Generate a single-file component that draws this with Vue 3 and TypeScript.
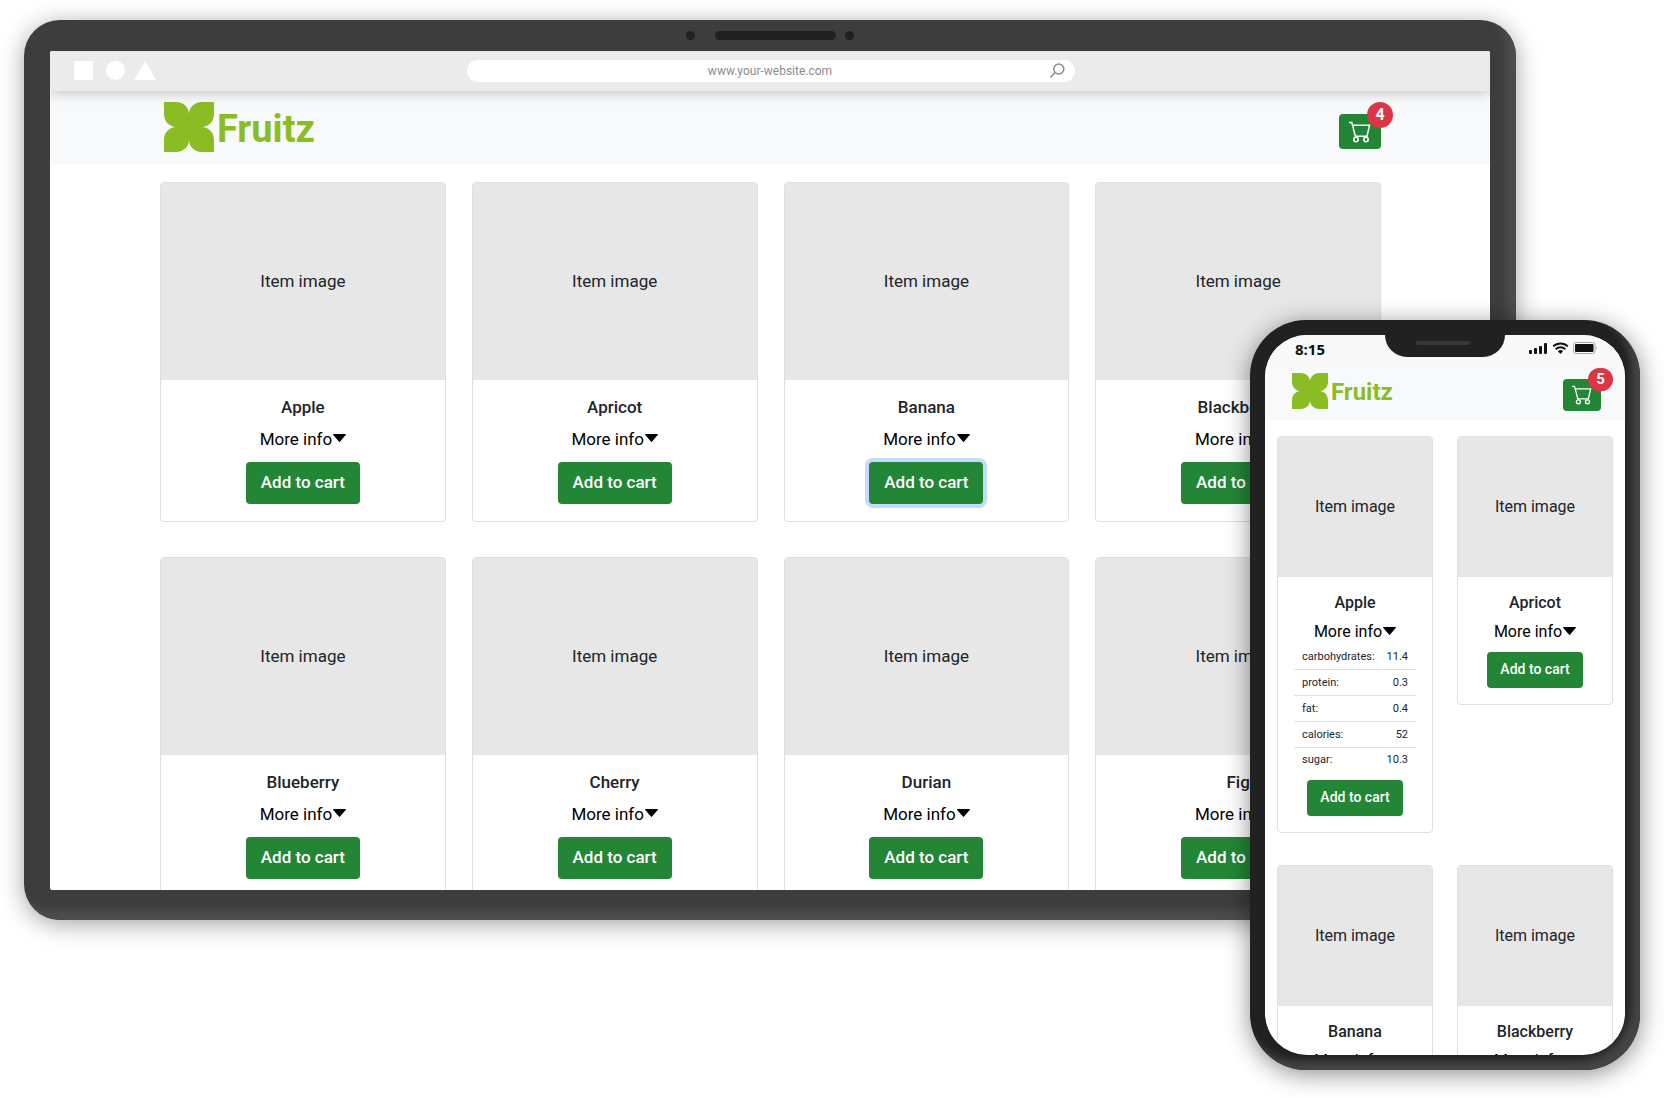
<script setup lang="ts">
interface Nutrient {
  label: string
  value: string
}

interface Fruit {
  name: string
  focused?: boolean
  nutrients?: Nutrient[]
}

interface Device {
  id: 'desktop' | 'mobile'
  cartCount: number
  fruits: Fruit[]
}

const desktop: Device = {
  id: 'desktop',
  cartCount: 4,
  fruits: [
    { name: 'Apple' },
    { name: 'Apricot' },
    { name: 'Banana', focused: true },
    { name: 'Blackberry' },
    { name: 'Blueberry' },
    { name: 'Cherry' },
    { name: 'Durian' },
    { name: 'Fig' },
  ],
}

const mobile: Device = {
  id: 'mobile',
  cartCount: 5,
  fruits: [
    {
      name: 'Apple',
      nutrients: [
        { label: 'carbohydrates:', value: '11.4' },
        { label: 'protein:', value: '0.3' },
        { label: 'fat:', value: '0.4' },
        { label: 'calories:', value: '52' },
        { label: 'sugar:', value: '10.3' },
      ],
    },
    { name: 'Apricot' },
    { name: 'Banana' },
    { name: 'Blackberry' },
  ],
}

const devices: Device[] = [desktop, mobile]
</script>

<template>
  <main class="stage">
    <section v-for="device in devices" :key="device.id" class="device" :class="device.id">
      <div v-if="device.id === 'desktop'" class="camera-bar">
        <span class="lens"></span>
        <span class="speaker"></span>
        <span class="lens"></span>
      </div>

      <div class="screen">
        <form v-if="device.id === 'desktop'" class="browser-bar" @submit.prevent>
          <svg class="shapes" width="82" height="20" viewBox="0 0 82 20" fill="#fff" aria-hidden="true">
            <rect width="19" height="19" />
            <circle cx="41.500" cy="9.500" r="9.500" />
            <path d="M71 0 82 19H60z" />
          </svg>
          <div class="address">
            <input type="text" value="www.your-website.com" aria-label="Address" />
            <svg width="16" height="16" viewBox="0 0 16 16" fill="none" stroke="#8c8c8c" stroke-width="1.500" aria-hidden="true">
              <circle cx="9.800" cy="6" r="5" />
              <path d="M6.200 9.500 1.300 14.500" />
            </svg>
          </div>
        </form>

        <div v-else class="status-bar">
          <time>8:15</time>
          <div class="notch"><span></span></div>
          <svg width="68" height="14" viewBox="0 0 68 14" aria-hidden="true">
            <g fill="#111">
              <rect x="0" y="9" width="3" height="4" rx="1" />
              <rect x="5" y="7" width="3" height="6" rx="1" />
              <rect x="10" y="5" width="3" height="8" rx="1" />
              <rect x="15" y="2" width="3" height="11" rx="1" />
              <path d="M31.500 13 34.100 10.300a3.800 3.800 0 0 0-5.200 0z" />
            </g>
            <g fill="none" stroke="#111" stroke-width="1.900">
              <path d="M24.200 5.400a10.600 10.600 0 0 1 14.600 0" />
              <path d="M26.700 8.200a6.900 6.900 0 0 1 9.600 0" />
            </g>
            <rect x="44.500" y="1.500" width="21.500" height="11" rx="2.500" fill="none" stroke="#aaa" />
            <rect x="46" y="3" width="18.500" height="8" rx="1" fill="#111" />
            <path d="M67 5.500v3q1.500-1.500 0-3" fill="#aaa" />
          </svg>
        </div>

        <header class="shop-header">
          <a href="#" class="brand">
            <svg viewBox="0 0 50 50" fill="#8abd24" aria-hidden="true">
              <path d="M0 0H12C20 0 25 6 25 12C25 6 30 0 38 0H50V12C50 20 44 25 38 25C44 25 50 30 50 38V50H38C30 50 25 44 25 38C25 44 20 50 12 50H0V38C0 30 6 25 12 25C6 25 0 20 0 12z" />
            </svg>
            <span>Fruitz</span>
          </a>
          <button type="button" class="cart" aria-label="Cart">
            <svg viewBox="0 0 22 22" fill="none" stroke="#fff" stroke-width="1.500" aria-hidden="true">
              <path d="M0 1.500H2.800L6.400 15.300H18L20.500 4.300H3.600" />
              <circle cx="7" cy="18.500" r="2.200" />
              <circle cx="17" cy="18.500" r="2.200" />
            </svg>
            <span class="badge">{{ device.cartCount }}</span>
          </button>
        </header>

        <div class="catalog">
          <article v-for="fruit in device.fruits" :key="fruit.name" class="card">
            <div class="picture">Item image</div>
            <div class="card-body">
              <h2>{{ fruit.name }}</h2>
              <button type="button" class="more">
                More info<svg width="13" height="8" viewBox="0 0 13 8" aria-hidden="true"><path d="M.600 0H12.400Q13.300 0 12.700.900L7.300 7.300Q6.500 8.300 5.700 7.300L.300.900Q-.300 0 .600 0z" /></svg>
              </button>
              <table v-if="fruit.nutrients">
                <tbody>
                  <tr v-for="row in fruit.nutrients" :key="row.label">
                    <th scope="row">{{ row.label }}</th>
                    <td>{{ row.value }}</td>
                  </tr>
                </tbody>
              </table>
              <button type="button" class="add" :class="{ focused: fruit.focused }">Add to cart</button>
            </div>
          </article>
        </div>
      </div>
    </section>
  </main>
</template>

<style>
body {
  margin: 0;
  background: #fff;
}
</style>

<style scoped>
* {
  box-sizing: border-box;
}

button,
input {
  font: inherit;
}

.stage {
  display: grid;
  padding: 20px 24px 28px;
  color: #212529;
  font-family: Roboto, sans-serif;
  overflow: hidden;
}

.device {
  grid-area: 1 / 1;
}

.screen {
  background: #fff;
  overflow: hidden;
}

/* Desktop frame */
.desktop {
  justify-self: start;
  align-self: start;
  width: calc(100% - 124px);
  padding: 0 26px 30px;
  border-radius: 36px;
  background: #3d3d3d;
  box-shadow: 0 4px 24px rgba(0, 0, 0, 0.36), inset -10px -10px 8px #4d4d4d;
  font-size: 17px;
  line-height: 26px;
}

.desktop .screen {
  aspect-ratio: 1440 / 839;
  border-radius: 2px;
}

.camera-bar {
  display: flex;
  align-items: center;
  justify-content: center;
  gap: 9px;
  height: 31px;
}

.lens {
  width: 9px;
  height: 9px;
  border-radius: 50%;
  background: #212121;
}

.lens:first-child {
  margin-right: 11px;
}

.speaker {
  width: 121px;
  height: 9px;
  border-radius: 5px;
  background: #212121;
}

.browser-bar {
  position: relative;
  display: grid;
  grid-template-columns: 1fr 608px 1fr;
  align-items: center;
  height: 40px;
  padding: 0 22px 0 24px;
  background: #ebebeb;
  box-shadow: 0 2px 12px rgba(0, 0, 0, 0.22);
}

.address {
  display: flex;
  align-items: center;
  height: 22px;
  padding: 0 10px 0 24px;
  border-radius: 11px;
  background: #fff;
}

.address input {
  flex: 1;
  min-width: 0;
  padding: 0;
  border: 0;
  outline: 0;
  background: none;
  color: #8c8c8c;
  font-size: 12px;
  line-height: 22px;
  text-align: center;
}

/* Phone frame */
.mobile {
  justify-self: end;
  z-index: 1;
  width: 390px;
  margin-top: 300px;
  padding: 15px;
  border-radius: 56px;
  background: #212121;
  box-shadow: 0 4px 24px rgba(0, 0, 0, 0.45), inset -9px -9px 8px #454545;
  font-size: 16px;
  line-height: 24px;
}

.mobile .screen {
  aspect-ratio: 1 / 2;
  border-radius: 42px;
}

.status-bar {
  display: grid;
  grid-template-columns: 1fr 120px 1fr;
  height: 27px;
  padding: 0 28px;
  background: #f8f8f8;
  color: #111;
}

.status-bar time {
  padding-left: 2px;
  font: 700 15px/28px "Open Sans", sans-serif;
}

.status-bar svg {
  justify-self: end;
  margin-top: 6px;
}

.notch {
  display: flex;
  justify-content: center;
  height: 22px;
  padding: 6px 4px 0 0;
  border-radius: 0 0 24px 24px;
  background: #212121;
}

.notch span {
  width: 54px;
  height: 4px;
  border-radius: 2px;
  background: #383838;
}

/* Shop header */
.shop-header {
  display: flex;
  justify-content: space-between;
  background: #f8f9fb;
}

.desktop .shop-header {
  height: 73px;
  padding: 11px 109px 0 114px;
}

.mobile .shop-header {
  height: 58px;
  padding: 11px 24px 0 27px;
}

.brand {
  display: flex;
  gap: 3px;
  align-self: flex-start;
  align-items: flex-start;
  color: #8abd24;
  font-weight: 700;
  text-decoration: none;
}

.brand span {
  padding-top: 1px;
}

.desktop .brand {
  font-size: 38px;
  line-height: 52px;
}

.desktop .brand svg {
  width: 50px;
  height: 50px;
}

.mobile .brand {
  font-size: 24px;
  line-height: 36px;
}

.mobile .brand svg {
  width: 36px;
  height: 36px;
}

.cart {
  position: relative;
  display: flex;
  align-items: center;
  justify-content: center;
  padding: 0;
  border: 0;
  border-radius: 4px;
  background: #238636;
}

.desktop .cart {
  width: 42px;
  height: 35px;
  margin-top: 12px;
}

.desktop .cart svg {
  width: 22px;
}

.mobile .cart {
  width: 38px;
  height: 32px;
  margin-top: 6px;
}

.mobile .cart svg {
  width: 20px;
}

.badge {
  position: absolute;
  top: -12px;
  right: -12px;
  width: 26px;
  border-radius: 13px;
  background: #dc3545;
  color: #fff;
  font-size: 16px;
  font-weight: 700;
  line-height: 26px;
  text-align: center;
}

.mobile .badge {
  top: -11px;
  width: 25px;
  font-size: 15px;
  line-height: 23px;
}

/* Product grid */
.catalog {
  display: grid;
  align-items: start;
}

.desktop .catalog {
  grid-template-columns: repeat(4, 1fr);
  gap: 35px 26px;
  padding: 18px 109px 0 110px;
}

.mobile .catalog {
  grid-template-columns: repeat(2, 1fr);
  gap: 32px 24px;
  padding: 16px 12px 0;
}

.card {
  border: 1px solid #dfdfdf;
  border-radius: 4px;
  overflow: hidden;
  text-align: center;
}

.picture {
  display: grid;
  place-items: center;
  background: #e7e7e7;
}

.desktop .picture {
  height: 197px;
  padding-bottom: 2px;
}

.mobile .picture {
  height: 140px;
}

.card-body {
  display: flex;
  flex-direction: column;
  align-items: center;
}

.desktop .card-body {
  padding: 14px 16px 17px;
}

.mobile .card-body {
  padding: 14px 16px 16px;
}

h2 {
  margin: 0;
  font-size: inherit;
  font-weight: 500;
  line-height: inherit;
}

.desktop h2 {
  margin-bottom: 6px;
}

.mobile h2 {
  margin-bottom: 5px;
}

.more {
  display: flex;
  align-items: center;
  gap: 1px;
  padding: 0;
  border: 0;
  background: none;
  color: #000;
}

.more svg {
  margin-bottom: 2px;
}

.add {
  padding: 0 0 2px;
  border: 0;
  border-radius: 4px;
  background: #238636;
  color: #fff;
  font-weight: 500;
}

.desktop .add {
  width: 114px;
  height: 42px;
  margin-top: 10px;
}

.mobile .add {
  width: 96px;
  height: 36px;
  margin-top: 8px;
  font-size: 14px;
}

.focused {
  box-shadow: 0 0 0 4px #c2dbfe;
}

table {
  width: 100%;
  border-collapse: collapse;
  font-size: 11px;
  line-height: 25px;
}

tr + tr {
  border-top: 1px solid #dee2e6;
}

tr:last-child {
  line-height: 24px;
}

th,
td {
  padding: 0 0 0 8px;
  font-weight: 400;
  text-align: left;
}

td {
  padding: 0 8px 0 0;
  text-align: right;
}
</style>
